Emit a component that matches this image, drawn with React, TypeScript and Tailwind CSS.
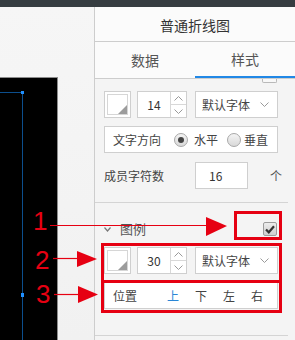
const Chevron = ({ up = false }: { up?: boolean }) => (
    <svg width="9" height="5" viewBox="0 0 9 5" fill="none">
        <path d={up ? 'M0.5 4.5L4.5 0.5L8.5 4.5' : 'M0.5 0.5L4.5 4.5L8.5 0.5'} stroke="#9a9a9a" strokeWidth="1" />
    </svg>
);

const Swatch = () => (
    <div className="w-[27px] h-[27px] border border-[#cfcfcf] bg-white p-[2px]">
        <div className="relative w-full h-full border border-[#d6d6d6] bg-white">
            <div className="absolute right-0 bottom-0 w-0 h-0 border-l-[9px] border-l-transparent border-b-[9px] border-b-[#9c9c9c]" />
        </div>
    </div>
);

const NumberInput = ({ value }: { value: string }) => (
    <div className="flex w-[50px] h-[27px] border border-[#cfcfcf] bg-white">
        <div className="flex-1 flex items-center justify-center text-[12px] text-[#333]">{value}</div>
        <div className="w-[16px] border-l border-[#d8d8d8] flex flex-col">
            <div className="flex-1 flex items-center justify-center border-b border-[#d8d8d8]">
                <Chevron up />
            </div>
            <div className="flex-1 flex items-center justify-center">
                <Chevron />
            </div>
        </div>
    </div>
);

const FontSelect = () => (
    <div className="w-[83px] h-[27px] border border-[#cfcfcf] bg-white flex items-center justify-between pl-[6px] pr-[8px]">
        <span className="text-[12px] text-[#444]">默认字体</span>
        <Chevron />
    </div>
);

const StyleRow = ({ value }: { value: string }) => (
    <div className="flex items-center">
        <Swatch />
        <div className="ml-[6px]">
            <NumberInput value={value} />
        </div>
        <div className="ml-[8px]">
            <FontSelect />
        </div>
    </div>
);

const Radio = ({ checked }: { checked: boolean }) => (
    <div className="w-[14px] h-[14px] rounded-full border border-[#a8a8a8] bg-gradient-to-b from-[#f4f4f4] to-[#d9d9d9] flex items-center justify-center">
        {checked && <div className="w-[6px] h-[6px] rounded-full bg-[#444]" />}
    </div>
);

const App = () => {
    return (
        <div className="relative w-[295px] h-[340px] overflow-hidden bg-[#f3f3f3] font-['Noto_Sans_CJK_SC',sans-serif]">
            {/* top bar */}
            <div className="h-[7px] bg-[#363d41]" />

            <div className="flex h-[333px]">
                {/* canvas side */}
                <div className="w-[95px] border-r border-[#cdcdcd] pt-[70px] bg-gradient-to-b from-[#f6f6f6] to-[#f1f1f1]">
                    <div className="w-[58px] h-full bg-black border-t border-r border-[#8c8c8c]">
                        <svg width="57" height="262" viewBox="0 0 57 262">
                            <line x1="0" y1="14.5" x2="22" y2="14.5" stroke="#0c4e8c" />
                            <line x1="22.5" y1="14" x2="22.5" y2="262" stroke="#0c4e8c" />
                            <rect x="21" y="13" width="3" height="3" fill="#1f8fff" />
                            <rect x="21" y="215" width="3" height="4" fill="#1f8fff" />
                        </svg>
                    </div>
                </div>

                {/* settings panel */}
                <div className="flex-1 flex flex-col">
                    <div className="h-[35px] pt-[2px] flex items-center justify-center border-b border-[#cdcdcd] bg-[#fbfbfb] text-[14px] text-[#333]">
                        普通折线图
                    </div>
                    <div className="h-[37px] flex border-b border-[#cdcdcd] bg-[#fbfbfb] text-[14px]">
                        <div className="flex-1 flex items-center justify-center text-[#555]">数据</div>
                        <div className="flex-1 flex items-center justify-center text-[#555] border-b-2 border-[#2188e6]">样式</div>
                    </div>

                    <div className="flex-1 bg-[#f4f4f4] pl-[9px] text-[12px] text-[#444]">
                        <div className="h-[4px] flex justify-end pr-[18px]">
                            <div className="w-[15px] h-[4px] border border-t-0 border-[#b9b9b9] bg-[#f8f8f8] rounded-b-[2px]" />
                        </div>

                        <div className="mt-[8px]">
                            <StyleRow value="14" />
                        </div>

                        <div className="mt-[8px] w-[174px] h-[27px] border border-[#cfcfcf] bg-white flex items-center pl-[8px]">
                            <span>文字方向</span>
                            <div className="ml-[13px]">
                                <Radio checked />
                            </div>
                            <span className="ml-[6px]">水平</span>
                            <div className="ml-[9px]">
                                <Radio checked={false} />
                            </div>
                            <span className="ml-[3px]">垂直</span>
                        </div>

                        <div className="mt-[9px] flex items-center">
                            <span className="w-[91px]">成员字符数</span>
                            <div className="w-[53px] h-[27px] border border-[#cfcfcf] bg-white flex items-center pl-[13px] text-[#333]">16</div>
                            <span className="ml-[22px] text-[#555]">个</span>
                        </div>

                        <div className="mt-[13px] -ml-[9px] w-[193px] h-px bg-[#d4d4d4]" />

                        <div className="mt-[18px] h-[16px] w-[174px] flex items-center justify-between">
                            <div className="flex items-center text-[13px] text-[#555]">
                                <svg width="7" height="5" viewBox="0 0 7 5" fill="none">
                                    <path d="M0.5 0.5L3.5 4L6.5 0.5" stroke="#777" strokeWidth="1.2" />
                                </svg>
                                <span className="ml-[9px]">图例</span>
                            </div>
                            <div className="mr-[1px] w-[14px] h-[14px] rounded-[2px] border border-[#9c9c9c] bg-gradient-to-b from-[#ececec] to-[#cfcfcf] flex items-center justify-center">
                                <svg width="10" height="9" viewBox="0 0 10 9" fill="none">
                                    <path d="M1 4.5L3.8 7.3L9 1.3" stroke="#333" strokeWidth="2.2" />
                                </svg>
                            </div>
                        </div>

                        <div className="mt-[10px]">
                            <StyleRow value="30" />
                        </div>

                        <div className="mt-[8px] w-[174px] h-[27px] border border-[#cfcfcf] bg-white flex items-center pl-[8px]">
                            <span>位置</span>
                            <span className="ml-[30px] text-[#2a86d6]">上</span>
                            <span className="ml-[16px]">下</span>
                            <span className="ml-[16px]">左</span>
                            <span className="ml-[16px]">右</span>
                        </div>

                        <div className="mt-[26px] -ml-[9px] w-[193px] h-px bg-[#d4d4d4]" />
                    </div>
                </div>
            </div>

            {/* annotation boxes */}
            <div className="absolute left-[234px] top-[211px] w-[48px] h-[29px] border-[3px] border-[#e60012]" />
            <div className="absolute left-[101px] top-[243px] w-[181px] h-[40px] border-[3px] border-[#e60012]" />
            <div className="absolute left-[101px] top-[280px] w-[181px] h-[33px] border-[3px] border-[#e60012]" />

            {/* annotation arrows */}
            <svg className="absolute left-0 top-0" width="295" height="340" viewBox="0 0 295 340">
                <line x1="50" y1="225.5" x2="208" y2="225.5" stroke="#e60012" strokeWidth="1.2" />
                <polygon points="206,217 227,226 206,236" fill="#e60012" />
                <line x1="53" y1="258.5" x2="78" y2="258.5" stroke="#e60012" strokeWidth="1.2" />
                <polygon points="77,251 97,259 77,267" fill="#e60012" />
                <line x1="54" y1="294.5" x2="79" y2="294.5" stroke="#e60012" strokeWidth="1.2" />
                <polygon points="78,286 98,294.5 78,303" fill="#e60012" />
            </svg>
            <span className="absolute left-[33px] top-[206px] text-[26px] leading-[30px] text-[#e60012] font-['Liberation_Sans',sans-serif]">1</span>
            <span className="absolute left-[35px] top-[245px] text-[26px] leading-[30px] text-[#e60012] font-['Liberation_Sans',sans-serif]">2</span>
            <span className="absolute left-[36px] top-[279px] text-[26px] leading-[30px] text-[#e60012] font-['Liberation_Sans',sans-serif]">3</span>
        </div>
    );
};

export default App;
